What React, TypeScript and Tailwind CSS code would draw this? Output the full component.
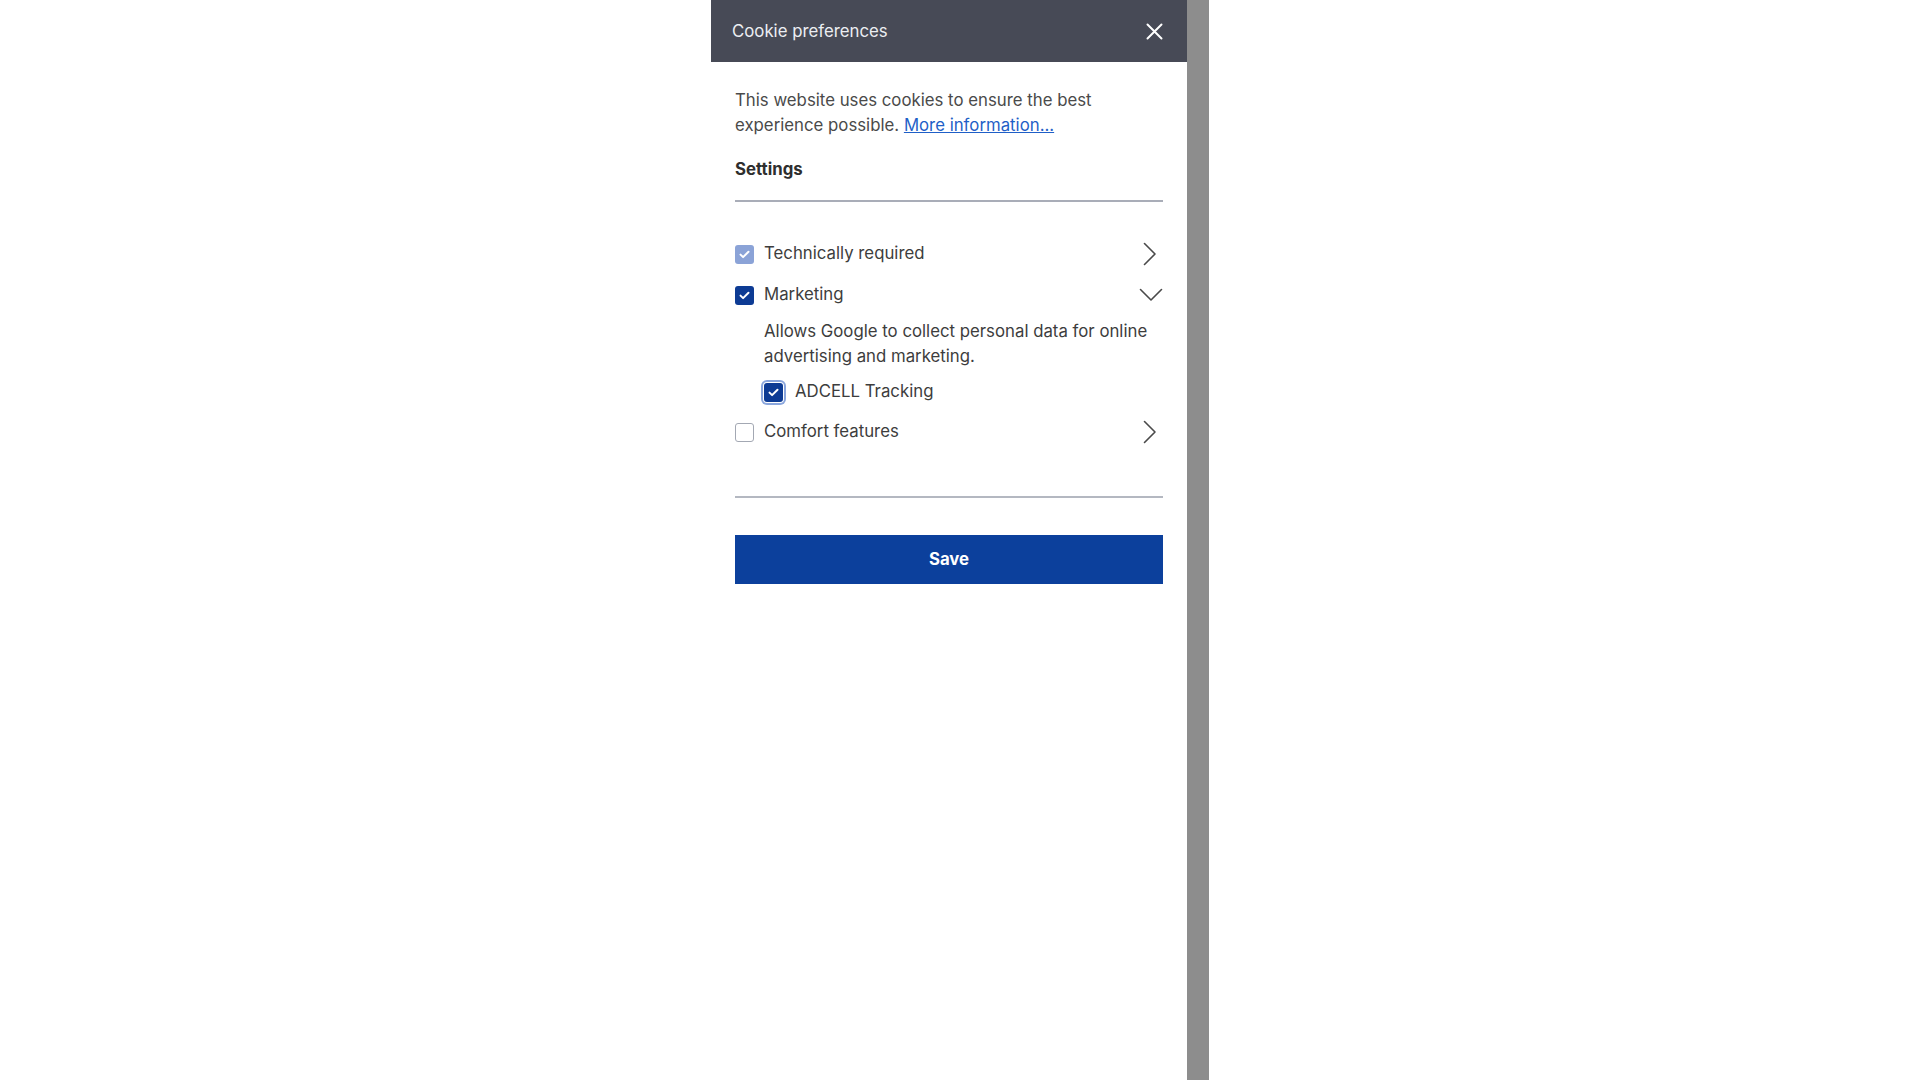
import React, { useState } from 'react';

const Check: React.FC = () => (
  <svg width="11" height="9" viewBox="0 0 11 9" fill="none">
    <path d="M1.5 4.6L4.1 7.1L9.5 1.8" stroke="white" strokeWidth="2" strokeLinecap="round" strokeLinejoin="round" />
  </svg>
);

const ChevronRight: React.FC = () => (
  <svg width="14" height="24" viewBox="0 0 14 24" fill="none">
    <path d="M1.5 1.5L12 12L1.5 22.5" stroke="#4a4a4a" strokeWidth="1.6" strokeLinecap="round" strokeLinejoin="round" />
  </svg>
);

const ChevronDown: React.FC = () => (
  <svg width="24" height="14" viewBox="0 0 24 14" fill="none">
    <path d="M1.5 1.5L12 12L22.5 1.5" stroke="#4a4a4a" strokeWidth="1.6" strokeLinecap="round" strokeLinejoin="round" />
  </svg>
);

const App: React.FC = () => {
  const [marketing, setMarketing] = useState(true);
  const [adcell, setAdcell] = useState(true);
  const [comfort, setComfort] = useState(false);

  return (
    <div className="flex min-h-screen w-full bg-white" style={{ fontFamily: 'Inter, "Noto Sans", sans-serif' }}>
      <div className="w-[711px] shrink-0" />
      <div className="flex h-screen w-[476px] shrink-0 flex-col bg-white">
        <div className="flex h-[62px] items-center justify-between bg-[#474a56] pl-[21px] pr-[24px]">
          <span className="mt-[2px] text-[16.8px] text-[#eceef2]">Cookie preferences</span>
          <svg width="17" height="17" viewBox="0 0 17 17" fill="none">
            <path d="M1.5 1.5L15.5 15.5M15.5 1.5L1.5 15.5" stroke="white" strokeWidth="2" strokeLinecap="round" />
          </svg>
        </div>

        <div className="px-6">
          <p className="mt-[26px] text-[16.8px] leading-[25px] text-[#4a4a4a]">
            This website uses cookies to ensure the best experience possible.{' '}
            <a href="#" className="text-[#1f5fc7] underline">More information...</a>
          </p>
          <h3 className="mt-[19px] text-[16.8px] font-bold leading-[24px] text-[#2e2e2e]">Settings</h3>
          <div className="mt-[19px] h-[2px] bg-[#a9adb8]" />

          <div className="mt-[40px] flex h-[24px] items-center">
            <span className="flex h-[19px] w-[19px] items-center justify-center rounded-[3px] bg-[#8ba3d7]">
              <Check />
            </span>
            <span className="ml-[10px] flex-1 text-[16.8px] text-[#3d3d3d]">Technically required</span>
            <span className="mr-[6px]"><ChevronRight /></span>
          </div>

          <div className="mt-[17px] flex h-[24px] items-center">
            <button
              onClick={() => setMarketing(!marketing)}
              className={`flex h-[19px] w-[19px] items-center justify-center rounded-[3px] ${marketing ? 'bg-[#0d3b94]' : 'border-[1.5px] border-[#a3a8b3] bg-white'}`}
            >
              {marketing && <Check />}
            </button>
            <span className="ml-[10px] flex-1 text-[16.8px] text-[#3d3d3d]">Marketing</span>
            <ChevronDown />
          </div>

          <p className="ml-[29px] mt-[12px] text-[16.8px] leading-[25px] text-[#3d3d3d]">
            Allows Google to collect personal data for online advertising and marketing.
          </p>

          <div className="ml-[29px] mt-[11px] flex h-[24px] items-center">
            <button
              onClick={() => setAdcell(!adcell)}
              className={`flex h-[19px] w-[19px] items-center justify-center rounded-[3px] ring-2 ring-[#8aa6dd] ring-offset-1 ${adcell ? 'bg-[#0d3b94]' : 'border-[1.5px] border-[#a3a8b3] bg-white'}`}
            >
              {adcell && <Check />}
            </button>
            <span className="ml-[12px] text-[16.8px] text-[#3d3d3d]">ADCELL Tracking</span>
          </div>

          <div className="mt-[16px] flex h-[24px] items-center">
            <button
              onClick={() => setComfort(!comfort)}
              className={`flex h-[19px] w-[19px] items-center justify-center rounded-[3px] ${comfort ? 'bg-[#0d3b94]' : 'border-[1.5px] border-[#a3a8b3] bg-white'}`}
            >
              {comfort && <Check />}
            </button>
            <span className="ml-[10px] flex-1 text-[16.8px] text-[#3d3d3d]">Comfort features</span>
            <span className="mr-[6px]"><ChevronRight /></span>
          </div>

          <div className="mt-[52px] h-[2px] bg-[#b4b8c1]" />

          <button className="mt-[37px] flex h-[49px] w-full items-center justify-center bg-[#0c409c] text-[16.8px] font-bold text-white">
            Save
          </button>
        </div>
      </div>
      <div className="h-screen w-[22px] shrink-0 bg-[#8d8d8d]" />
      <div className="flex-1" />
    </div>
  );
};

export default App;
